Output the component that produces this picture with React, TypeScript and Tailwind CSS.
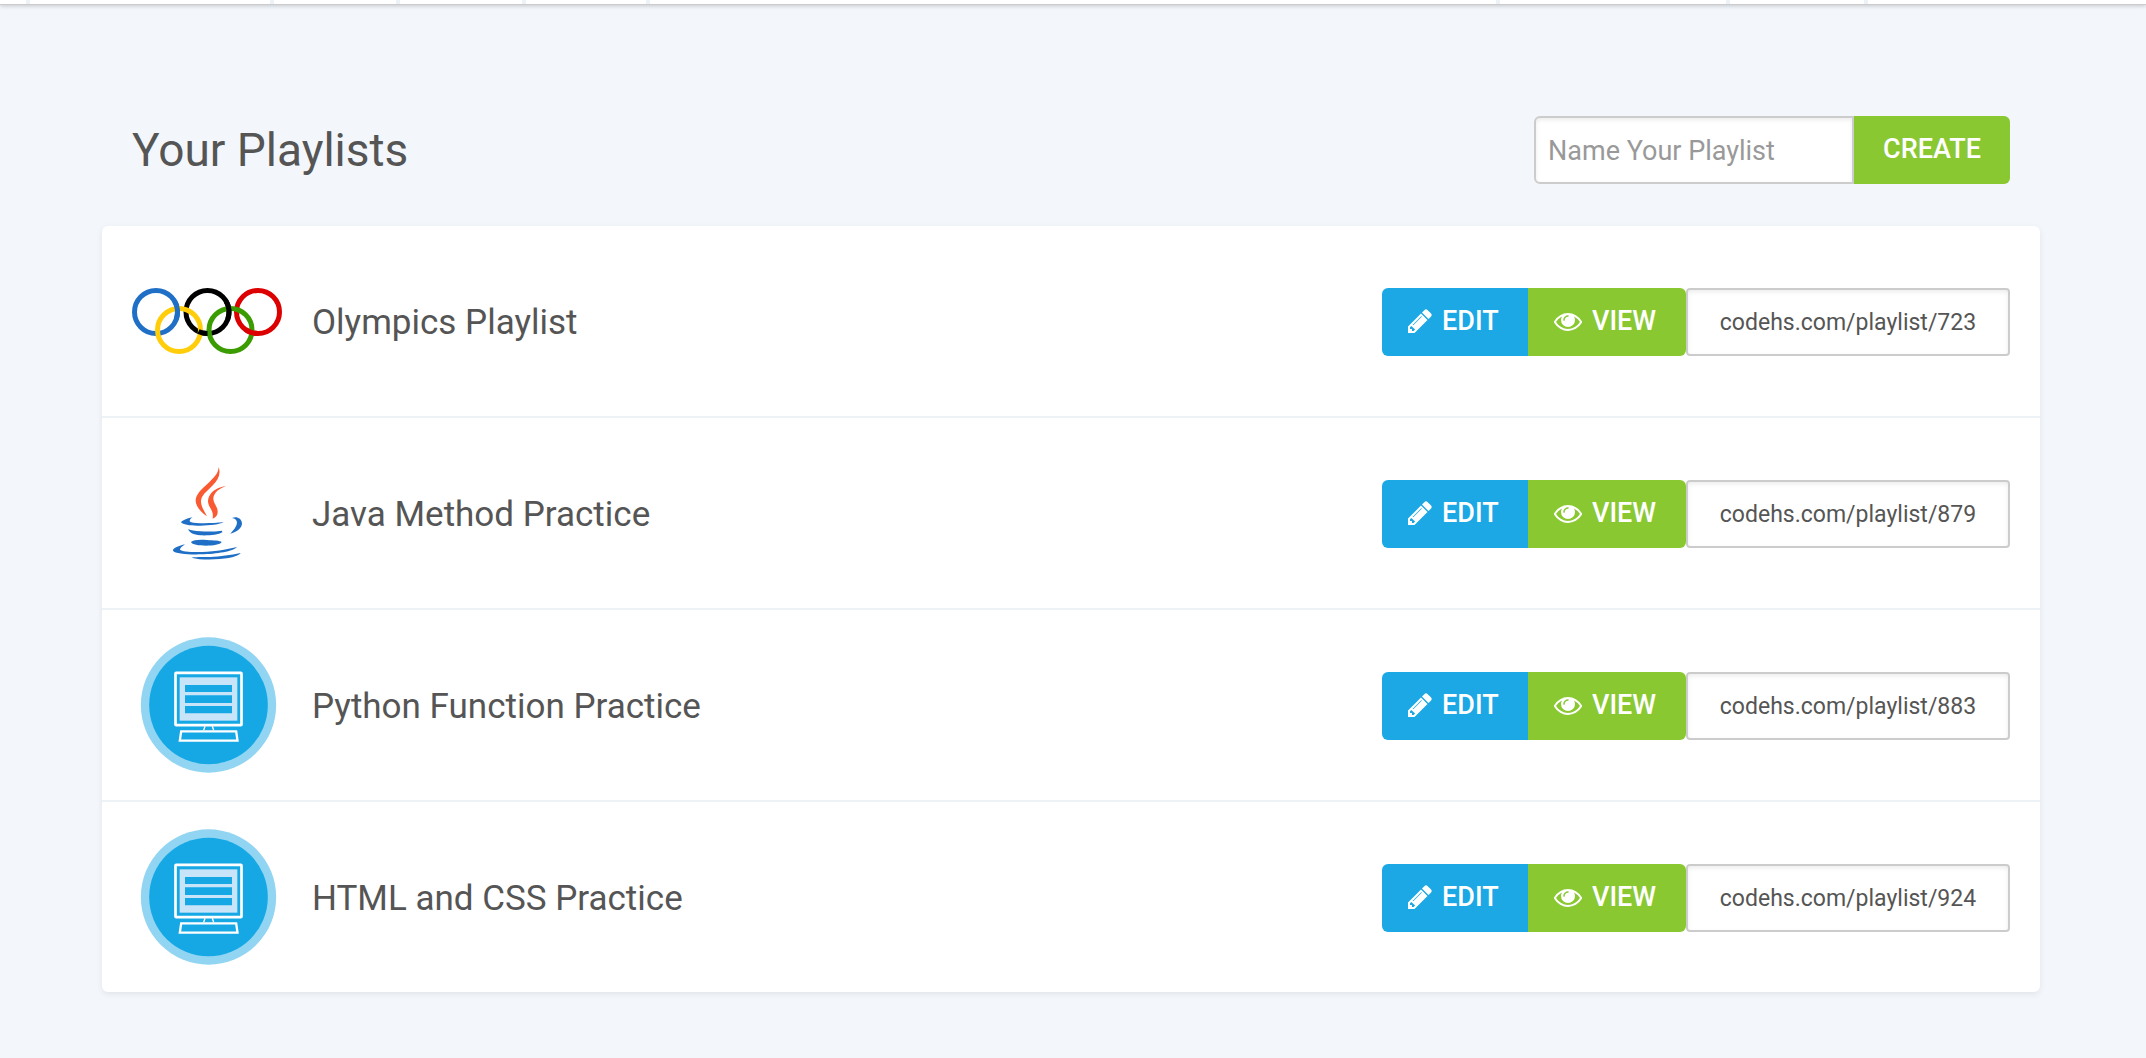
import { useState } from 'react';
import type { ReactNode } from 'react';

function PencilIcon() {
  return (
    <svg className="w-6 h-7" viewBox="128 0 1536 1792" fill="currentColor" aria-hidden="true">
      <path d="M491 1536l91-91-235-235-91 91v107h128v128h107zm523-928q0-22-22-22-10 0-17 7l-542 542q-7 7-7 17 0 22 22 22 10 0 17-7l542-542q7-7 7-17zm-54-192l416 416-832 832h-416v-416zm683 96q0 53-37 90l-166 166-416-416 166-165q36-38 90-38 53 0 91 38l235 234q37 39 37 91z" />
    </svg>
  );
}

function EyeIcon() {
  return (
    <svg className="w-7 h-7" viewBox="0 0 1792 1792" fill="currentColor" aria-hidden="true">
      <path d="M1664 960q-152-236-381-353 61 104 61 225 0 185-131.5 316.5t-316.5 131.5-316.5-131.5-131.5-316.5q0-121 61-225-229 117-381 353 133 205 333.5 326.5t434.5 121.5 434.5-121.5 333.5-326.5zm-720-384q0-20-14-34t-34-14q-125 0-214.5 89.5t-89.5 214.5q0 20 14 34t34 14 34-14 14-34q0-86 61-147t147-61q20 0 34-14t14-34zm848 384q0 34-20 69-140 230-376.5 368.5t-499.5 138.5-499.5-139-376.5-368q-20-35-20-69t20-69q140-229 376.5-368t499.5-139 499.5 139 376.5 368q20 35 20 69z" />
    </svg>
  );
}

function OlympicRings() {
  return (
    <svg className="w-full" viewBox="0 0 150 66" fill="none" strokeWidth="5" aria-hidden="true">
      <circle cx="24" cy="24" r="21.5" stroke="#1f6fc6" />
      <circle cx="75.5" cy="24" r="21.5" stroke="#000" />
      <circle cx="126" cy="24" r="21.5" stroke="#dc0000" />
      <circle cx="47" cy="42" r="21.5" stroke="#ffcd0a" />
      <circle cx="98.5" cy="42" r="21.5" stroke="#3a9c00" />
      {/* segments that pass back over the lower rings */}
      <path d="M42.6 13.25A21.5 21.5 0 0 1 44.2 31.35" stroke="#1f6fc6" />
      <path d="M75.5 45.5A21.5 21.5 0 0 1 66.4 43.5" stroke="#000" />
      <path d="M94.1 13.25A21.5 21.5 0 0 1 95.7 31.35" stroke="#000" />
      <path d="M126 45.5A21.5 21.5 0 0 1 113.7 41.6" stroke="#dc0000" />
    </svg>
  );
}

function JavaLogo() {
  return (
    <svg className="w-full" viewBox="-54 -36 450 450" aria-hidden="true">
      <g fill="#fa5a32">
        <path d="M206 51C213 72 205 88 189 105C169 126 153 136 153 155C154 171 163 184 171 199C153 187 138 170 137 153C137 133 154 119 172 102C192 83 205 71 206 51Z" />
        <path d="M228 109C211 113 191 128 190 145C190 161 204 171 203 186C203 195 198 203 188 206C190 192 187 184 181 174C174 163 171 151 178 138C187 121 207 111 228 109Z" />
      </g>
      <g fill="#1f6fc6">
        <path d="M128 201C116 204 96 211 93 217C99 225 125 228 151 227C179 227 210 223 221 217C195 219 165 221 139 219C126 218 119 216 119 212C119 208 124 204 128 201Z" />
        <path d="M246 204C259 198 275 204 276 220C276 234 260 247 241 251C250 241 260 230 261 219C261 210 255 205 246 204Z" />
        <path d="M115 237C116 247 130 254 151 256C174 257 205 255 217 247L216 242C195 245 172 245 151 244C135 243 122 241 115 237Z" />
        <path d="M123 276C130 269 151 268 171 270C190 271 211 272 215 276C211 284 189 287 168 287C146 287 126 284 123 276Z" />
        <path d="M105 283C88 287 68 294 69 302C75 311 113 314 153 313C201 312 250 304 261 291C225 300 181 306 141 306C115 306 95 304 90 299C90 294 97 289 105 283Z" />
        <path d="M124 323C154 331 206 329 236 324C256 320 268 315 272 309C241 315 212 320 181 321C159 321 140 320 124 323Z" />
      </g>
    </svg>
  );
}

function ComputerBadge() {
  return (
    <svg className="w-full" viewBox="6 0 450 450" aria-hidden="true">
      <circle cx="235.5" cy="225" r="203" fill="#92d5f3" />
      <circle cx="235.5" cy="225" r="178" fill="#16a8e4" />
      <rect x="136.5" y="128.5" width="198" height="157" rx="2" fill="none" stroke="#fff" strokeWidth="8" />
      <rect x="149" y="142" width="173" height="130" fill="#c8e4f8" />
      <path d="M165 165h141v21H165zM165 196h141v23H165zM165 228h141v22H165z" fill="#16a8e4" />
      <path d="M225 289l-4 12M247 289l4 12" stroke="#fff" strokeWidth="4" />
      <path d="M153.5 304h165l4 28H149.5z" fill="none" stroke="#fff" strokeWidth="7" />
    </svg>
  );
}

interface Playlist {
  id: number;
  name: string;
  image: ReactNode;
}

const playlists: Playlist[] = [
  { id: 723, name: 'Olympics Playlist', image: <OlympicRings /> },
  { id: 879, name: 'Java Method Practice', image: <JavaLogo /> },
  { id: 883, name: 'Python Function Practice', image: <ComputerBadge /> },
  { id: 924, name: 'HTML and CSS Practice', image: <ComputerBadge /> },
];

function NavStrip() {
  return (
    <nav className="flex justify-between h-[5px] bg-white border-b border-[#ccc] shadow-[0_1px_4px_rgba(0,0,0,0.2)]">
      <div className="flex">
        <span className="w-[30px] border-r-4 border-[#edf2f6]" />
        <span className="w-[244px] border-r-4 border-[#edf2f6]" />
        <span className="w-[126px] border-r-4 border-[#edf2f6]" />
        <span className="w-[126px] border-r-4 border-[#edf2f6]" />
        <span className="w-[124px] border-r-4 border-[#edf2f6]" />
      </div>
      <div className="flex">
        <span className="w-[230px] border-l-4 border-[#edf2f6]" />
        <span className="w-[138px] border-l-4 border-[#edf2f6]" />
        <span className="w-[282px] border-l-4 border-[#edf2f6]" />
      </div>
    </nav>
  );
}

function PlaylistRow({ id, name, image }: Playlist) {
  return (
    <li className="flex items-center gap-[30px] px-[30px] py-5">
      <div className="flex items-center w-[150px] h-[150px] shrink-0">{image}</div>
      <h2 className="flex-1 pt-1 text-[35px] leading-10">{name}</h2>
      <div className="flex h-[70px] pt-0.5 text-[27px] font-medium text-white">
        <a
          href={`#edit-${id}`}
          className="flex items-center gap-2.5 w-[146px] pl-[26px] pb-0.5 bg-[#1ba8e5] hover:bg-[#1796cd] rounded-l-md"
        >
          <PencilIcon />
          EDIT
        </a>
        <a
          href={`#view-${id}`}
          className="flex items-center gap-2.5 w-[158px] pl-[26px] pb-0.5 bg-[#8ac832] hover:bg-[#7bb32c] rounded-r-md"
        >
          <EyeIcon />
          VIEW
        </a>
        <input
          type="text"
          readOnly
          aria-label={`Link to ${name}`}
          value={`codehs.com/playlist/${id}`}
          className="w-[324px] pt-0.5 bg-white border-2 border-[#ccc] rounded shadow-[inset_0_2px_4px_rgba(0,0,0,0.08)] text-center text-[23px] font-normal text-[#555]"
        />
      </div>
    </li>
  );
}

export default function App() {
  const [playlistName, setPlaylistName] = useState('');

  return (
    <div className="min-h-screen bg-[#f3f7fc] font-['Roboto',sans-serif] text-[#555]">
      <NavStrip />

      <main className="pt-[111px] pb-16 pl-[102px] pr-[106px]">
        {/* Heading and create form */}
        <div className="flex items-center justify-between px-[30px] mb-[42px]">
          <h1 className="text-[46px] leading-[64px]">Your Playlists</h1>
          <form className="flex h-[68px]" onSubmit={(e) => e.preventDefault()}>
            <input
              type="text"
              aria-label="Playlist name"
              placeholder="Name Your Playlist"
              value={playlistName}
              onChange={(e) => setPlaylistName(e.target.value)}
              className="w-80 px-3 pt-0.5 bg-white border-2 border-[#ccc] rounded-l-md shadow-[inset_0_2px_4px_rgba(0,0,0,0.08)] text-[27px] placeholder:text-[#999]"
            />
            <button
              type="submit"
              className="w-[156px] pb-0.5 bg-[#8ac832] hover:bg-[#7bb32c] rounded-r-md text-[27px] font-medium text-white"
            >
              CREATE
            </button>
          </form>
        </div>

        {/* Playlists */}
        <ul className="bg-white rounded-md shadow-[0_2px_6px_rgba(0,0,0,0.08)] divide-y-2 divide-[#edf2f6]">
          {playlists.map((playlist) => (
            <PlaylistRow key={playlist.id} {...playlist} />
          ))}
        </ul>
      </main>
    </div>
  );
}
